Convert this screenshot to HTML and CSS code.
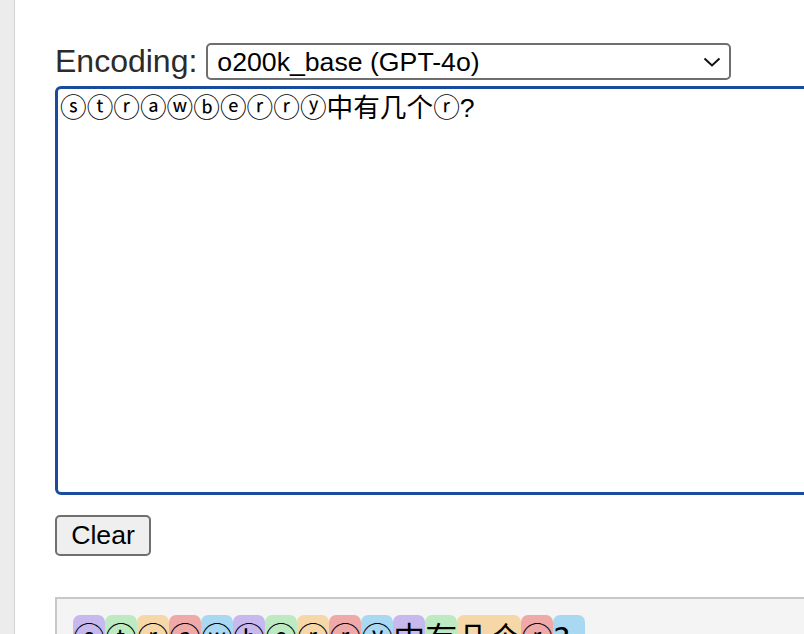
FILE: index.html
```html
<!DOCTYPE html>
<html lang="en">
<head>
  <meta charset="UTF-8">
  <title>Tokenizer</title>
  <link rel="stylesheet" href="styles.css">
</head>
<body>

  <div class="panel">
    <!-- Encoding picker -->
    <div class="encoding-row">
      <label for="encoding">Encoding:</label>
      <select id="encoding" class="encoding-select">
        <option>o200k_base (GPT-4o)</option>
        <option>cl100k_base (GPT-4)</option>
        <option>p50k_base</option>
        <option>r50k_base</option>
      </select>
    </div>

    <textarea id="inputText" class="input-text">ⓢⓣⓡⓐⓦⓑⓔⓡⓡⓨ中有几个ⓡ?</textarea>

    <button type="button" class="clear-btn">Clear</button>

    <!-- Tokens -->
    <div class="tokens">
      <span class="token c0">ⓢ</span><span class="token c1">ⓣ</span><span class="token c2">ⓡ</span><span class="token c3">ⓐ</span><span class="token c4">ⓦ</span><span class="token c0">ⓑ</span><span class="token c1">ⓔ</span><span class="token c2">ⓡ</span><span class="token c3">ⓡ</span><span class="token c4">ⓨ</span><span class="token c0">中</span><span class="token c1">有</span><span class="token c2">几个</span><span class="token c3">ⓡ</span><span class="token c4">?</span>
    </div>
  </div>

</body>
</html>
```

FILE: styles.css
```css
* {
  box-sizing: border-box;
}

body {
  margin: 0;
  background: #ececec;
  font-family: "Liberation Sans", "Noto Sans CJK SC", sans-serif;
  overflow: hidden;
}

.panel {
  margin-left: 14px;
  border-left: 1px solid #d3d3d3;
  background: #fff;
  min-height: 100vh;
  padding: 43px 0 0 40px;
}

.encoding-row {
  display: flex;
  align-items: center;
  gap: 9px;
}

label {
  font-size: 32px;
  line-height: 37px;
  color: #2b2b2b;
}

.encoding-select {
  appearance: none;
  width: 525px;
  height: 37px;
  padding: 0 40px 0 9px;
  border: 2px solid #6f6f6f;
  border-radius: 5px;
  background: #fff url("data:image/svg+xml,%3Csvg xmlns='http://www.w3.org/2000/svg' width='18' height='10' viewBox='0 0 18 10'%3E%3Cpath d='M1.5 1.5 L9 8.5 L16.5 1.5' fill='none' stroke='%23111' stroke-width='2'/%3E%3C/svg%3E") no-repeat right 8px center;
  font-family: "Liberation Sans", sans-serif;
  font-size: 26.67px;
  color: #000;
}

.input-text {
  display: block;
  width: 800px;
  height: 409px;
  margin-top: 6px;
  padding: 3px 2px;
  border: 3px solid #1b4b9f;
  border-radius: 6px;
  outline: none;
  resize: none;
  font-family: "Liberation Sans", "DejaVu Sans", "Noto Sans CJK SC", sans-serif;
  font-size: 26.67px;
  line-height: 1.2;
  color: #000;
}

.clear-btn {
  display: block;
  margin-top: 20px;
  width: 96px;
  height: 41px;
  padding: 0;
  border: 2px solid #6f6f6f;
  border-radius: 5px;
  background: #efefef;
  font-family: "Liberation Sans", sans-serif;
  font-size: 26.67px;
  color: #000;
}

.tokens {
  margin-top: 41px;
  width: 800px;
  padding: 16px;
  border: 2px solid #c8c8c8;
  background: #f4f4f4;
  font-family: "DejaVu Sans", "Noto Sans CJK SC", sans-serif;
  font-size: 32px;
  color: #000;
}

.token {
  display: inline-block;
  min-width: 32px;
  line-height: 48px;
  border-radius: 7px;
}

.c0 { background: #c7b9ee; }
.c1 { background: #bdebc1; }
.c2 { background: #f6d8a8; }
.c3 { background: #efa9a9; }
.c4 { background: #a9d8f2; }
```
